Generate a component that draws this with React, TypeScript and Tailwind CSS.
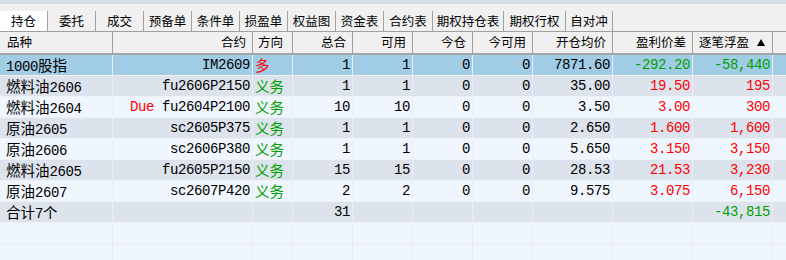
import React from "react";

const COLS = "grid grid-cols-[113px_140px_40px_60px_60px_60px_60px_80px_80px_80px_13px]";

const RED = "text-[#ff0000]";
const GREEN = "text-[#00a000]";

function Mixed({ s, cls = "" }: { s: string; cls?: string }) {
  const parts = s.split(/([\u4e00-\u9fff]+)/).filter((p) => p.length > 0);
  return (
    <span className={`leading-[15px] ${cls}`}>
      {parts.map((p, i) =>
        /[\u4e00-\u9fff]/.test(p) ? (
          <span key={i} className="text-[14.5px] leading-[15px] tracking-normal [font-family:'Noto_Sans_CJK_SC',sans-serif]">
            {p}
          </span>
        ) : (
          <span key={i} className="leading-[15px]">{p}</span>
        )
      )}
    </span>
  );
}

type Row = {
  name: string;
  due?: boolean;
  code: string;
  dir: string;
  dirRed?: boolean;
  total: string;
  avail: string;
  today: string;
  todayAvail: string;
  avg: string;
  diff: string;
  diffGreen?: boolean;
  pnl: string;
  pnlGreen?: boolean;
};

const rows: Row[] = [
  { name: "1000股指", code: "IM2609", dir: "多", dirRed: true, total: "1", avail: "1", today: "0", todayAvail: "0", avg: "7871.60", diff: "-292.20", diffGreen: true, pnl: "-58,440", pnlGreen: true },
  { name: "燃料油2606", code: "fu2606P2150", dir: "义务", total: "1", avail: "1", today: "0", todayAvail: "0", avg: "35.00", diff: "19.50", pnl: "195" },
  { name: "燃料油2604", due: true, code: "fu2604P2100", dir: "义务", total: "10", avail: "10", today: "0", todayAvail: "0", avg: "3.50", diff: "3.00", pnl: "300" },
  { name: "原油2605", code: "sc2605P375", dir: "义务", total: "1", avail: "1", today: "0", todayAvail: "0", avg: "2.650", diff: "1.600", pnl: "1,600" },
  { name: "原油2606", code: "sc2606P380", dir: "义务", total: "1", avail: "1", today: "0", todayAvail: "0", avg: "5.650", diff: "3.150", pnl: "3,150" },
  { name: "燃料油2605", code: "fu2605P2150", dir: "义务", total: "15", avail: "15", today: "0", todayAvail: "0", avg: "28.53", diff: "21.53", pnl: "3,230" },
  { name: "原油2607", code: "sc2607P420", dir: "义务", total: "2", avail: "2", today: "0", todayAvail: "0", avg: "9.575", diff: "3.075", pnl: "6,150" },
];

const tabs: { label: string; w: string; active?: boolean }[] = [
  { label: "持仓", w: "w-[48px]", active: true },
  { label: "委托", w: "w-[48px]" },
  { label: "成交", w: "w-[48px]" },
  { label: "预备单", w: "w-[48px]" },
  { label: "条件单", w: "w-[48px]" },
  { label: "损盈单", w: "w-[48px]" },
  { label: "权益图", w: "w-[48px]" },
  { label: "资金表", w: "w-[48px]" },
  { label: "合约表", w: "w-[49px]" },
  { label: "期权持仓表", w: "w-[71px]" },
  { label: "期权行权", w: "w-[62px]" },
  { label: "自对冲", w: "w-[47px]" },
];

const cell = "h-full flex items-center pt-[1px] leading-[15px] border-r border-[#eaeff5] overflow-hidden whitespace-nowrap";
const num = `${cell} justify-end pr-[2px]`;

function DataRow({ r, bg }: { r: Row; bg: string }) {
  return (
    <div className={`${COLS} h-[21px] border-b border-[#eef2f7] ${bg}`}>
      <div className={`${cell} pl-[6px]`}>
        <Mixed s={r.name} />
      </div>
      <div className={num}>
        <span>
          {r.due && <span className={`${RED} mr-[8px]`}>Due</span>}
          {r.code}
        </span>
      </div>
      <div className={`${cell} pl-[2px]`}>
        <Mixed s={r.dir} cls={r.dirRed ? RED : GREEN} />
      </div>
      <div className={num}>{r.total}</div>
      <div className={num}>{r.avail}</div>
      <div className={num}>{r.today}</div>
      <div className={num}>{r.todayAvail}</div>
      <div className={num}>{r.avg}</div>
      <div className={`${num} ${r.diffGreen ? GREEN : RED}`}>{r.diff}</div>
      <div className={`${num} ${r.pnlGreen ? GREEN : RED}`}>{r.pnl}</div>
      <div className="h-full" />
    </div>
  );
}

function EmptyRow({ bg }: { bg: string }) {
  return (
    <div className={`${COLS} h-[21px] border-b border-[#e8ecf1] ${bg}`}>
      {Array.from({ length: 10 }).map((_, i) => (
        <div key={i} className="h-full border-r border-[#e8ecf1]" />
      ))}
      <div className="h-full" />
    </div>
  );
}

const hcell = "h-full flex items-center border-r border-[#a0a0a0] whitespace-nowrap";
const hnum = `${hcell} justify-end pr-[6px]`;

export default function App() {
  return (
    <div className="w-[786px] h-[260px] overflow-hidden bg-[#f0f6fd] text-black text-[14px] tracking-[-0.4px] [font-family:'Liberation_Mono','Noto_Sans_CJK_SC',monospace]">
      <div className="h-[4px] bg-[#d6dbe8]" />
      <div className="h-[7px] bg-[#f0f0f0]" />
      <div className="flex h-[20px] bg-[#f0f0f0] text-[12.5px] tracking-normal [font-family:'Noto_Sans_CJK_SC',sans-serif]">
        {tabs.map((t) => (
          <div
            key={t.label}
            className={`${t.w} h-full flex items-center justify-center border-r border-[#a0a0a0] ${t.active ? "bg-white" : ""}`}
          >
            {t.label}
          </div>
        ))}
      </div>
      <div className={`${COLS} h-[24px] bg-[#f0f0f0] border-t border-[#a0a0a0] border-b-2 border-b-[#a5a5a5] text-[12.5px] tracking-normal [font-family:'Noto_Sans_CJK_SC',sans-serif]`}>
        <div className={`${hcell} pl-[7px]`}>品种</div>
        <div className={hnum}>合约</div>
        <div className={`${hcell} pl-[5px]`}>方向</div>
        <div className={hnum}>总合</div>
        <div className={hnum}>可用</div>
        <div className={hnum}>今仓</div>
        <div className={hnum}>今可用</div>
        <div className={hnum}>开仓均价</div>
        <div className={hnum}>盈利价差</div>
        <div className={`${hcell} pl-[6px] pr-[7px] justify-between`}>
          <span>逐笔浮盈</span>
          <svg width="8" height="7" viewBox="0 0 8 7">
            <polygon points="4,0 8,7 0,7" fill="#000" />
          </svg>
        </div>
        <div className="h-full" />
      </div>
      {rows.map((r, i) => (
        <DataRow
          key={r.code}
          r={r}
          bg={i === 0 ? "bg-[#a1cce6]" : i % 2 === 1 ? "bg-[#dde3ec]" : "bg-[#f0f6fd]"}
        />
      ))}
      <div className={`${COLS} h-[21px] border-b border-[#eef2f7] bg-[#dde3ec]`}>
        <div className={`${cell} pl-[6px]`}>
          <Mixed s="合计7个" />
        </div>
        <div className={cell} />
        <div className={cell} />
        <div className={num}>31</div>
        <div className={cell} />
        <div className={cell} />
        <div className={cell} />
        <div className={cell} />
        <div className={cell} />
        <div className={`${num} ${GREEN}`}>-43,815</div>
        <div className="h-full" />
      </div>
      <EmptyRow bg="bg-[#f0f6fd]" />
      <EmptyRow bg="bg-[#f0f6fd]" />
    </div>
  );
}
